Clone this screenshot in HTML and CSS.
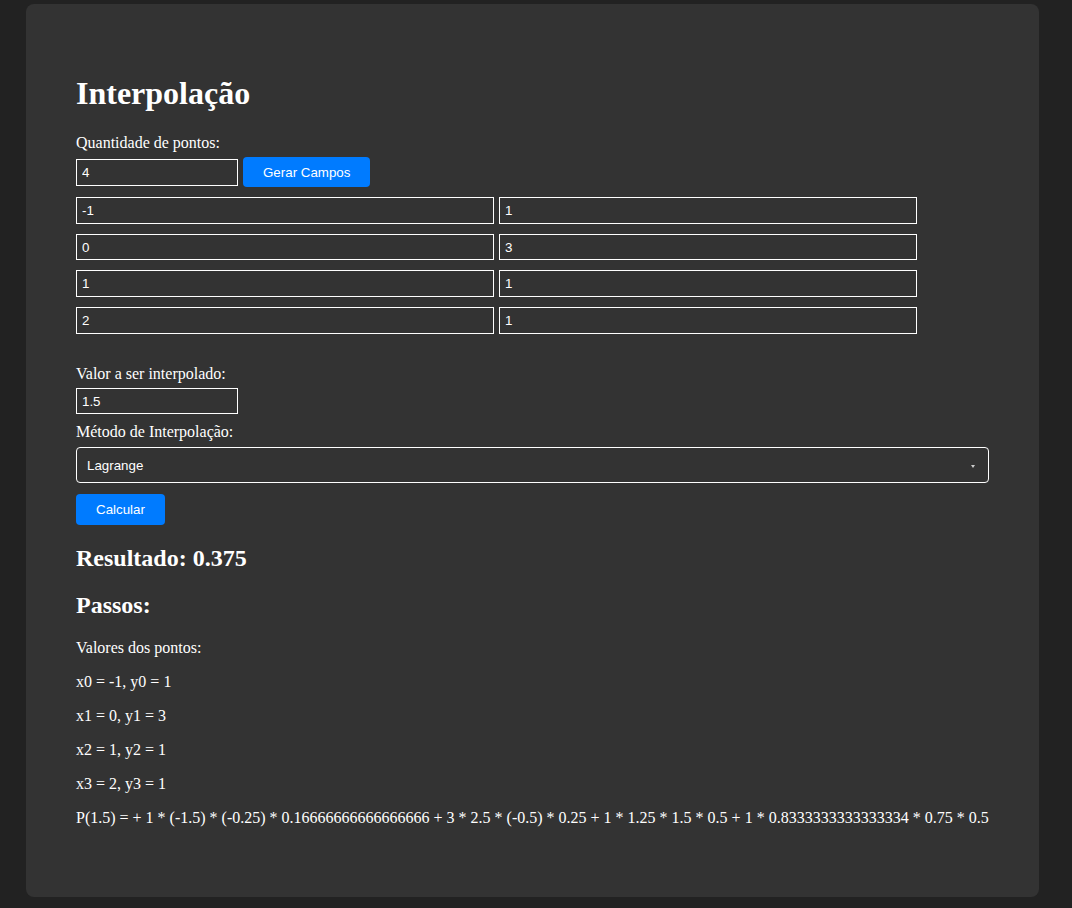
FILE: index.html
```html
<!DOCTYPE html>
<html lang="pt">
<head>
<meta charset="utf-8">
<title>Interpolação</title>
<link rel="stylesheet" href="styles.css">
</head>
<body>
<div class="container">
  <h1>Interpolação</h1>
  <label class="field-label" for="qtd">Quantidade de pontos:</label>
  <div class="count-row">
    <input id="qtd" class="text-input small" type="text" value="4">
    <button class="btn" type="button">Gerar Campos</button>
  </div>
  <div class="points">
    <div class="point-row">
      <input class="text-input point" type="text" value="-1">
      <input class="text-input point" type="text" value="1">
    </div>
    <div class="point-row">
      <input class="text-input point" type="text" value="0">
      <input class="text-input point" type="text" value="3">
    </div>
    <div class="point-row">
      <input class="text-input point" type="text" value="1">
      <input class="text-input point" type="text" value="1">
    </div>
    <div class="point-row">
      <input class="text-input point" type="text" value="2">
      <input class="text-input point" type="text" value="1">
    </div>
  </div>
  <label class="field-label spaced" for="valor">Valor a ser interpolado:</label>
  <input id="valor" class="text-input small single" type="text" value="1.5">
  <label class="field-label method" for="metodo">Método de Interpolação:</label>
  <div class="select-wrap">
    <select id="metodo" class="select">
      <option>Lagrange</option>
      <option>Newton</option>
    </select>
  </div>
  <button class="btn calc" type="button">Calcular</button>
  <h2>Resultado: 0.375</h2>
  <h2>Passos:</h2>
  <p>Valores dos pontos:</p>
  <p>x0 = -1, y0 = 1</p>
  <p>x1 = 0, y1 = 3</p>
  <p>x2 = 1, y2 = 1</p>
  <p>x3 = 2, y3 = 1</p>
  <p>P(1.5) = + 1 * (-1.5) * (-0.25) * 0.16666666666666666 + 3 * 2.5 * (-0.5) * 0.25 + 1 * 1.25 * 1.5 * 0.5 + 1 * 0.8333333333333334 * 0.75 * 0.5</p>
</div>
</body>
</html>
```

FILE: styles.css
```css
html, body {
  margin: 0;
  padding: 0;
}

body {
  background: #222222;
  color: #ffffff;
  font-family: "Liberation Serif", "Times New Roman", serif;
  font-size: 16px;
  padding: 4px 0 0 26px;
  min-height: 908px;
  box-sizing: border-box;
}

.container {
  width: 1013px;
  box-sizing: border-box;
  background: #333333;
  border-radius: 8px;
  padding: 50px 50px 54px;
}

h1 {
  font-size: 32px;
  margin: 21.44px 0;
}

h2 {
  font-size: 24px;
  margin: 20px 0;
}

p {
  margin: 16px 0;
}

.field-label {
  display: block;
  margin-bottom: 5px;
}

.field-label.spaced {
  margin-top: 31px;
  margin-bottom: 5px;
}

.field-label.method {
  margin-top: 8.5px;
  margin-bottom: 6px;
}

.count-row {
  display: flex;
  align-items: center;
  gap: 5px;
}

.text-input {
  font-family: "Liberation Sans", Arial, sans-serif;
  font-size: 13.333px;
  color: #ffffff;
  background: #333333;
  border: 1px solid #ffffff;
  border-radius: 0;
  padding: 5px;
  margin: 0;
  box-sizing: border-box;
  height: 26.7px;
  outline: none;
}

.text-input.small {
  width: 162px;
}

.text-input.single {
  display: block;
}

.points {
  margin-top: 9.5px;
  display: flex;
  flex-direction: column;
  gap: 10px;
}

.point-row {
  display: flex;
  gap: 5px;
}

.text-input.point {
  width: 418px;
}

.btn {
  font-family: "Liberation Sans", Arial, sans-serif;
  font-size: 13.333px;
  color: #ffffff;
  background: #007bff;
  border: none;
  border-radius: 4px;
  padding: 0 20px;
  height: 30.6px;
  margin: 0;
  cursor: pointer;
}

.btn.calc {
  display: block;
  margin-top: 11px;
}

.select-wrap {
  position: relative;
  width: 913px;
}

.select-wrap::after {
  content: "";
  position: absolute;
  right: 14px;
  top: 18px;
  width: 0;
  height: 0;
  border-left: 2.5px solid transparent;
  border-right: 2.5px solid transparent;
  border-top: 3px solid #cccccc;
  pointer-events: none;
}

.select {
  display: block;
  width: 913px;
  height: 36.5px;
  box-sizing: border-box;
  font-family: "Liberation Sans", Arial, sans-serif;
  font-size: 13.333px;
  color: #ffffff;
  background: #333333;
  border: 1px solid #ffffff;
  border-radius: 4px;
  padding: 0 10px;
  margin: 0;
  appearance: none;
  -webkit-appearance: none;
}
```
